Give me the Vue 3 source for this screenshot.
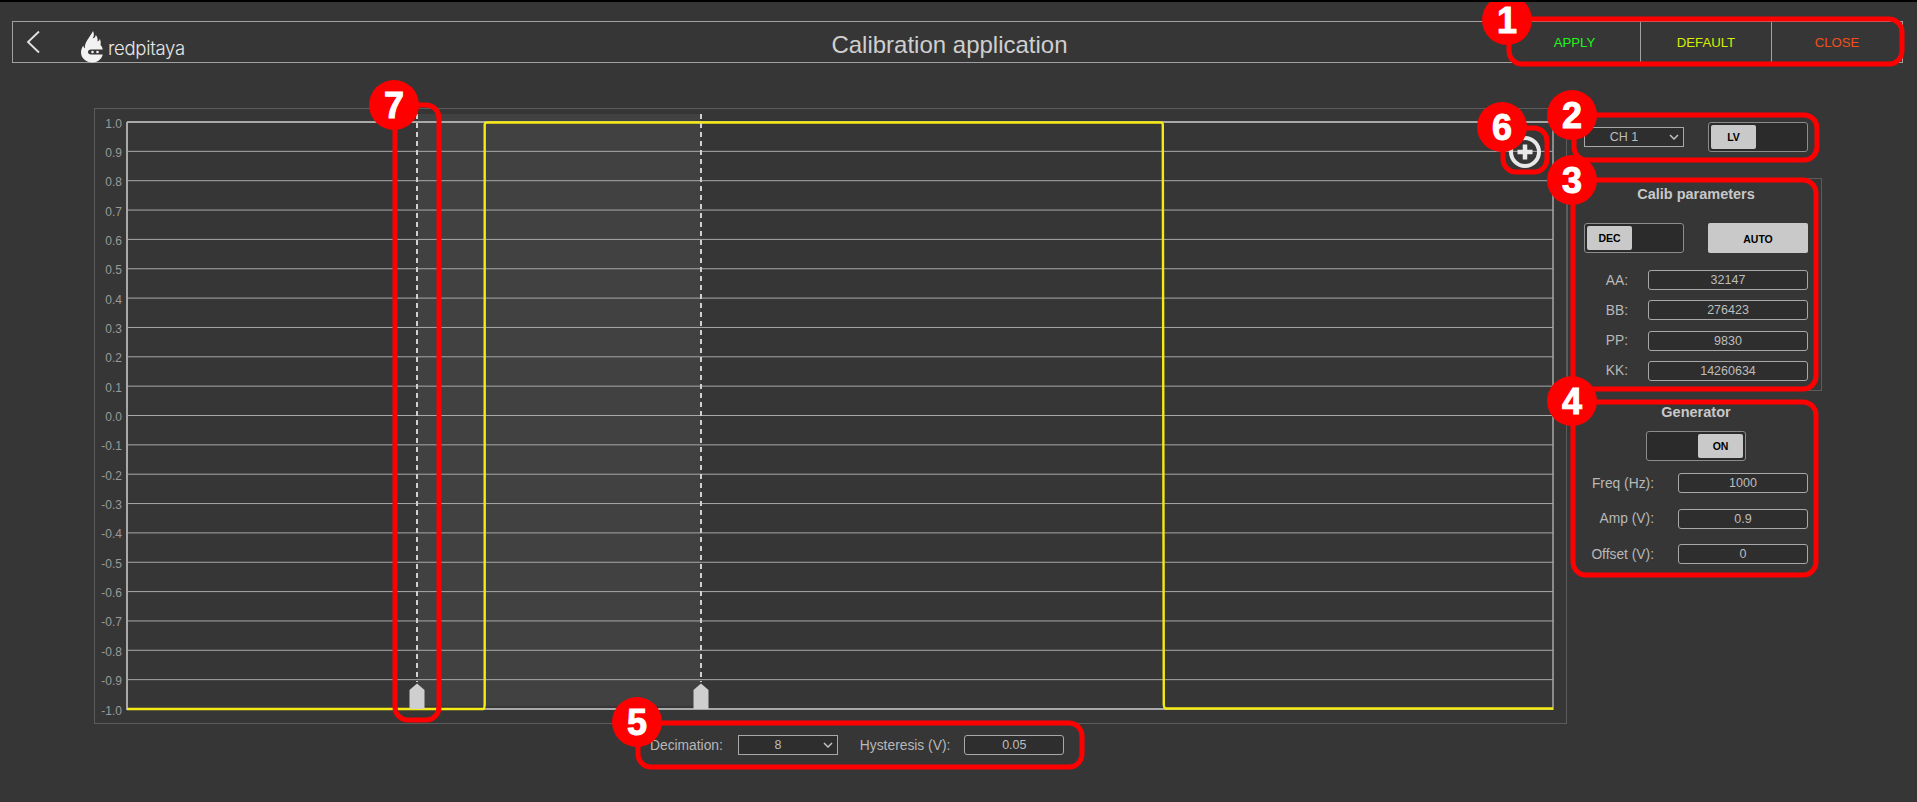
<template>
  <div class="page">
    <header class="topbar">
      <div class="brand">
        <svg class="back" width="14" height="24" viewBox="0 0 14 24">
          <path d="M13 1.500 2 12l11 10.500" fill="none" stroke="#e4e4e4" stroke-width="1.800" />
        </svg>
        <svg class="flame" width="24" height="33" viewBox="0 0 24 33">
          <path
            fill="#f2f2f2"
            d="M12 1c1.500 3 1 5.500-.5 7.500 1.800-.3 3-1.500 3.300-3.500 1.700 2 2.200 4.300 1.700 6.500 1.300-.5 2-1.500 2.300-2.800 1 2.300 1.200 4.500.7 6.300 1.500 1.500 2.500 3.500 2.500 7 0 6-4.500 10.500-10.500 10.500C5 32.500 0 28 0 22.500c0-3 1-5 2.300-7 .2 1.300.8 2.200 1.700 2.700C3.200 12 8.500 8 12 1z"
          />
          <path fill="#363636" d="M7 22c0-1.500 1-2.500 3-2.500h14v5H10c-2 0-3-1-3-2.500z" />
          <circle cx="11.500" cy="22" r="1.300" fill="#f2f2f2" />
          <circle cx="16.500" cy="22" r="1.300" fill="#f2f2f2" />
        </svg>
        <span class="wordmark">redpitaya</span>
      </div>
      <h1 class="title">Calibration application</h1>
      <nav class="actions">
        <a class="apply">APPLY</a>
        <a class="default">DEFAULT</a>
        <a class="close">CLOSE</a>
      </nav>
    </header>

    <main class="main">
      <section class="left">
        <div class="chart">
          <svg class="plot" width="1471" height="614" viewBox="95 109 1471 614">
            <rect x="417" y="114" width="284" height="592" fill="#414141" />
            <line
              v-for="t in ticks"
              :key="t.label"
              x1="127"
              x2="1553"
              :y1="t.y"
              :y2="t.y"
              stroke="#a9a9a9"
              :stroke-width="t.edge ? 2 : 1"
            />
            <text
              v-for="t in ticks"
              :key="'l' + t.label"
              class="tick"
              x="122"
              :y="t.y + 5.500"
              text-anchor="end"
            >{{ t.label }}</text>
            <line x1="127" x2="127" y1="122" y2="710" stroke="#a9a9a9" stroke-width="2" />
            <line x1="1553" x2="1553" y1="122" y2="710" stroke="#a9a9a9" stroke-width="1.500" />
            <path
              d="M127 709H483.500Q484.500 709 484.700 704V125Q484.700 122.500 487 122.500H1161Q1162.800 122.500 1162.800 125L1163.800 704Q1163.800 708.500 1166 708.500H1553"
              fill="none"
              stroke="#f5ea14"
              stroke-width="2.400"
            />
            <g v-for="x in cursors" :key="x">
              <line
                :x1="x"
                :x2="x"
                y1="114"
                y2="682"
                stroke="#d0d0d0"
                stroke-width="2"
                stroke-dasharray="5 4"
              />
              <path :d="`M${x - 7.500} 709V690L${x} 683.500L${x + 7.500} 690V709Z`" fill="#cfcfcf" />
            </g>
            <circle cx="1525" cy="152" r="14" fill="none" stroke="#e8e8e8" stroke-width="4" />
            <path d="M1525 144.500v15M1517.500 152h15" stroke="#e8e8e8" stroke-width="4.500" />
          </svg>
        </div>
        <div class="bottom">
          <label class="lbl">Decimation:</label>
          <div class="picker">
            <select class="sel"><option>8</option></select>
            <svg class="chevron" width="10" height="6" viewBox="0 0 10 6">
              <path d="M1 1l4 4 4-4" fill="none" stroke="#c0c0c0" stroke-width="1.500" />
            </svg>
          </div>
          <label class="lbl hyst">Hysteresis (V):</label>
          <input class="field" value="0.05" readonly />
        </div>
      </section>

      <aside class="side">
        <div class="channel">
          <div class="picker">
            <select class="sel"><option>CH 1</option></select>
            <svg class="chevron" width="10" height="6" viewBox="0 0 10 6">
              <path d="M1 1l4 4 4-4" fill="none" stroke="#c0c0c0" stroke-width="1.500" />
            </svg>
          </div>
          <div class="toggle"><span class="knob">LV</span></div>
        </div>

        <div class="panel calib">
          <h3>Calib parameters</h3>
          <div class="modes">
            <div class="toggle"><span class="knob">DEC</span></div>
            <button class="auto">AUTO</button>
          </div>
          <div class="rows">
            <div v-for="p in calib" :key="p.name" class="row">
              <span class="lbl">{{ p.name }}:</span>
              <input class="field" :value="p.value" readonly />
            </div>
          </div>
        </div>

        <div class="panel gen">
          <h3>Generator</h3>
          <div class="toggle on"><span class="knob">ON</span></div>
          <div class="rows">
            <div v-for="p in gen" :key="p.name" class="row">
              <span class="lbl">{{ p.name }}:</span>
              <input class="field" :value="p.value" readonly />
            </div>
          </div>
        </div>
      </aside>
    </main>

    <!-- numbered callouts drawn over the whole screenshot -->
    <svg class="marks" width="1917" height="802" viewBox="0 0 1917 802">
      <rect
        v-for="b in boxes"
        :key="b.x + '-' + b.y"
        :x="b.x"
        :y="b.y"
        :width="b.w"
        :height="b.h"
        rx="13"
        fill="none"
        stroke="#f00"
        stroke-width="5"
      />
      <g v-for="d in dots" :key="d.n">
        <circle :cx="d.x" :cy="d.y" r="25" fill="#f00" />
        <text class="num" :x="d.x" :y="d.y + 13" text-anchor="middle">{{ d.n }}</text>
      </g>
    </svg>
  </div>
</template>

<script setup>
const ticks = [];
for (let i = 0; i <= 20; i++) {
  ticks.push({
    label: ((10 - i) / 10).toFixed(1),
    y: 122 + i * 29.35,
    edge: i === 0 || i === 20,
  });
}

const cursors = [417, 701];

const calib = [
  { name: "AA", value: "32147" },
  { name: "BB", value: "276423" },
  { name: "PP", value: "9830" },
  { name: "KK", value: "14260634" },
];

const gen = [
  { name: "Freq (Hz)", value: "1000" },
  { name: "Amp (V)", value: "0.9" },
  { name: "Offset (V)", value: "0" },
];

const boxes = [
  { x: 1509, y: 19, w: 393, h: 45 },
  { x: 1574, y: 115, w: 243, h: 45 },
  { x: 1573, y: 180, w: 243, h: 209 },
  { x: 1573, y: 402, w: 243, h: 173 },
  { x: 638, y: 723, w: 444, h: 44 },
  { x: 1503, y: 128, w: 44, h: 44 },
  { x: 395, y: 105, w: 44, h: 615 },
];

const dots = [
  { n: 1, x: 1507, y: 20 },
  { n: 2, x: 1572, y: 115 },
  { n: 3, x: 1572, y: 180 },
  { n: 4, x: 1572, y: 401 },
  { n: 5, x: 637, y: 722 },
  { n: 6, x: 1502, y: 127 },
  { n: 7, x: 394, y: 105 },
];
</script>

<style>
html,
body {
  margin: 0;
  background: #363636;
}
</style>

<style scoped>
.page {
  position: relative;
  width: 1917px;
  height: 802px;
  box-sizing: border-box;
  border-top: 2px solid #000;
  padding-top: 19px;
  background: #363636;
  overflow: hidden;
  font-family: "Liberation Sans", Arial, sans-serif;
  color: #bdbdbd;
}
.topbar {
  display: flex;
  align-items: stretch;
  box-sizing: border-box;
  width: 1891px;
  height: 42px;
  margin-left: 12px;
  border: 1px solid #a0a0a0;
}
.brand {
  display: flex;
  align-items: center;
  width: 377px;
  padding-left: 13px;
  box-sizing: border-box;
}
.flame {
  margin: 8px 0 0 41px;
}
.wordmark {
  margin: 12px 0 0 3px;
  font-family: Inter, sans-serif;
  font-weight: 300;
  font-size: 18.5px;
  letter-spacing: -0.3px;
  color: #e8e8e8;
}
.title {
  flex: 1;
  margin: 0;
  padding-top: 5px;
  text-align: center;
  font-weight: 400;
  font-size: 24px;
  line-height: 36px;
  color: #cfcfcf;
}
.actions {
  display: flex;
}
.actions a {
  display: flex;
  align-items: center;
  justify-content: center;
  width: 131px;
  font-size: 13.2px;
  border-left: 1px solid #a0a0a0;
  box-sizing: border-box;
}
.actions a:first-child {
  border-left: 0;
}
.apply {
  color: #1ef51a;
}
.default {
  color: #d4f000;
}
.close {
  color: #f0501a;
}

.main {
  display: flex;
  margin: 45px 0 0 94px;
}
.chart {
  width: 1473px;
  height: 616px;
  box-sizing: border-box;
  border: 1px solid #5c5c5c;
}
.plot {
  display: block;
}
.tick {
  font-size: 12px;
  fill: #9a9a9a;
}
.bottom {
  display: flex;
  align-items: center;
  margin: 11px 0 0 556px;
}
.bottom .picker {
  margin-left: 15px;
}
.hyst {
  margin: 0 14px 0 22px;
}
.bottom .field {
  flex: none;
  width: 100px;
}

.lbl {
  font-size: 13.8px;
  color: #b8b8b8;
  white-space: nowrap;
}
.picker {
  position: relative;
  width: 100px;
  height: 20px;
}
.chevron {
  position: absolute;
  right: 5px;
  top: 7px;
  pointer-events: none;
}
.sel {
  display: block;
  width: 100%;
  height: 100%;
  box-sizing: border-box;
  padding: 0 20px 0 0;
  border: 1px solid #a8a8a8;
  border-radius: 0;
  background: #2e2e2e;
  color: #bdbdbd;
  font-family: inherit;
  font-size: 12.5px;
  text-align: center;
  outline: none;
  appearance: none;
}
.field {
  flex: 1;
  min-width: 0;
  height: 20px;
  box-sizing: border-box;
  padding: 0;
  border: 1px solid #a8a8a8;
  border-radius: 3px;
  background: #2e2e2e;
  color: #bdbdbd;
  font-family: inherit;
  font-size: 12.5px;
  text-align: center;
  outline: none;
}

.side {
  display: flex;
  flex-direction: column;
  width: 255px;
}
.channel {
  display: flex;
  align-items: center;
  gap: 24px;
  margin: 14px 0 26px 17px;
}
.toggle {
  display: flex;
  width: 100px;
  height: 30px;
  padding: 2px;
  box-sizing: border-box;
  border: 1px solid #8c8c8c;
  border-radius: 3px;
  background: #2b2b2b;
}
.toggle.on {
  justify-content: flex-end;
}
.knob {
  display: flex;
  align-items: center;
  justify-content: center;
  width: 45px;
  height: 100%;
  border-radius: 2px;
  background: #c9c9c9;
  color: #000;
  font-weight: 700;
  font-size: 10.5px;
}
.panel h3 {
  margin: 0;
  text-align: center;
  font-size: 14.5px;
  line-height: 18px;
  color: #c8c8c8;
}
.calib {
  box-sizing: border-box;
  height: 213px;
  padding: 6px 13px 0 16px;
  border: 1px solid #5c5c5c;
}
.modes {
  display: flex;
  justify-content: space-between;
  margin-top: 20px;
}
.auto {
  width: 100px;
  height: 30px;
  padding: 2px 0 0;
  border: 0;
  border-radius: 2px;
  background: #c9c9c9;
  color: #000;
  font-family: inherit;
  font-weight: 700;
  font-size: 10.5px;
}
.rows {
  display: flex;
  flex-direction: column;
}
.row {
  display: flex;
  align-items: center;
}
.calib .rows {
  gap: 10.3px;
  margin-top: 17px;
}
.calib .lbl {
  width: 44px;
  margin-right: 20px;
  text-align: right;
}
.gen {
  margin-top: 12px;
  padding: 0 14px 0 17px;
}
.gen .toggle {
  margin: 10px 0 0 62px;
}
.gen .rows {
  gap: 15.5px;
  margin-top: 12px;
}
.gen .lbl {
  width: 70px;
  margin-right: 24px;
  text-align: right;
}
.marks {
  position: absolute;
  left: 0;
  top: -2px;
  pointer-events: none;
}
.num {
  font-family: "Liberation Sans", sans-serif;
  font-weight: 700;
  font-size: 36px;
  fill: #fff;
  stroke: #fff;
  stroke-width: 1px;
}
</style>
